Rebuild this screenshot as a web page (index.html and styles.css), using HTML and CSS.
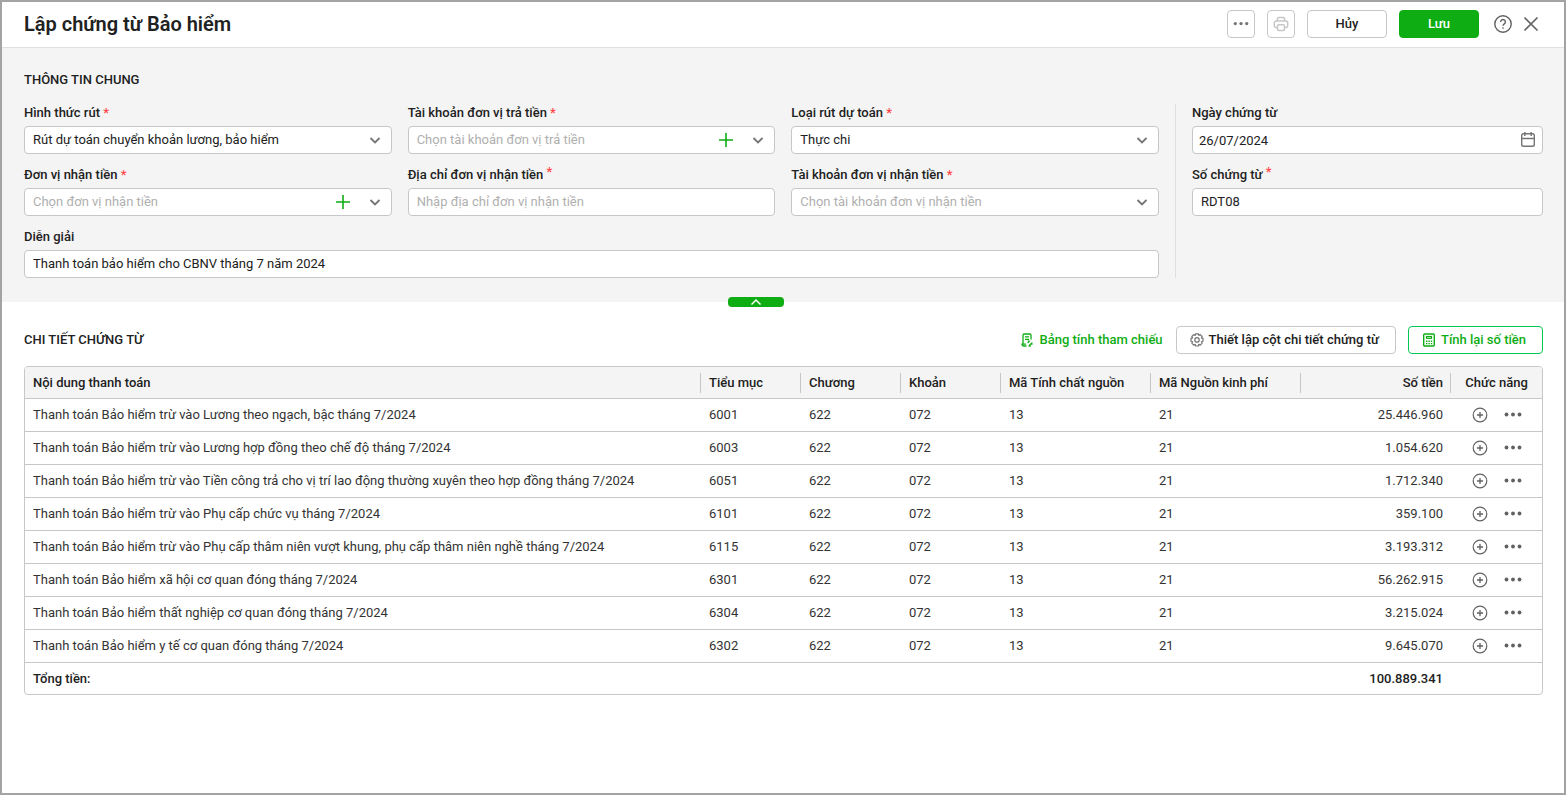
FILE: index.html
```
<!DOCTYPE html>
<html lang="vi">
<head>
    <meta charset="UTF-8">
    <meta name="viewport" content="width=device-width, initial-scale=1.0">
    <title>Lập chứng từ Bảo hiểm</title>
    <link rel="stylesheet" href="styles.css">
</head>
<body>
    <svg class="sprite" aria-hidden="true">
        <symbol id="i-chevron" viewBox="0 0 16 16"><path d="M3.5 6l4.5 4.5L12.5 6" fill="none" stroke="currentColor" stroke-width="1.8"/></symbol>
        <symbol id="i-plus" viewBox="0 0 16 16"><path d="M8 1v14M1 8h14" fill="none" stroke="currentColor" stroke-width="1.6"/></symbol>
        <symbol id="i-dots" viewBox="0 0 18 16"><circle cx="2.5" cy="7.5" r="1.9"/><circle cx="9" cy="7.5" r="1.9"/><circle cx="15.5" cy="7.5" r="1.9"/></symbol>
        <symbol id="i-add" viewBox="0 0 16 16"><circle cx="8" cy="8" r="6.8" fill="none" stroke="currentColor" stroke-width="1.2"/><path d="M8 5v6M5 8h6" fill="none" stroke="currentColor" stroke-width="1.3"/></symbol>
    </svg>

    <div class="popup">
        <header class="popup-header">
            <h1>Lập chứng từ Bảo hiểm</h1>
            <div class="header-actions">
                <button class="btn btn-icon" type="button" aria-label="Thêm"><svg class="dots-small"><use href="#i-dots"/></svg></button>
                <button class="btn btn-icon btn-print" type="button" aria-label="In">
                    <svg viewBox="0 0 16 16" fill="none" stroke="currentColor" stroke-width="1.5">
                        <path d="M4.5 5V2.6a1 1 0 0 1 1-1h5a1 1 0 0 1 1 1V5"/>
                        <path d="M4.5 11.5H3a1.7 1.7 0 0 1-1.7-1.7V7A1.9 1.9 0 0 1 3.2 5.1h9.6A1.9 1.9 0 0 1 14.7 7v2.8a1.7 1.7 0 0 1-1.7 1.7h-1.5"/>
                        <rect x="4.5" y="8.7" width="7" height="5.7" rx="1.2"/>
                    </svg>
                </button>
                <button class="btn btn-wide" type="button">Hủy</button>
                <button class="btn btn-wide btn-save" type="button">Lưu</button>
                <div class="window-actions">
                    <button class="plain" type="button" aria-label="Trợ giúp">
                        <svg class="icon-20" viewBox="0 0 20 20" fill="none" stroke="currentColor" stroke-width="1.4">
                            <circle cx="10" cy="10" r="8.2"/>
                            <path d="M7.6 7.9a2.4 2.4 0 1 1 3.7 2c-.9.6-1.3 1-1.3 1.9"/>
                            <circle cx="10" cy="14" r=".5" fill="currentColor" stroke-width=".6"/>
                        </svg>
                    </button>
                    <button class="plain" type="button" aria-label="Đóng">
                        <svg class="icon-20" viewBox="0 0 20 20" fill="none" stroke="currentColor" stroke-width="1.6"><path d="M3.5 3.5l13 13M16.5 3.5l-13 13"/></svg>
                    </button>
                </div>
            </div>
        </header>

        <section class="general">
            <h2>THÔNG TIN CHUNG</h2>
            <div class="general-body">
                <div class="fields">
                    <div class="field">
                        <label for="method">Hình thức rút <span class="required">*</span></label>
                        <div class="control">
                            <select id="method"><option>Rút dự toán chuyển khoản lương, bảo hiểm</option></select>
                            <svg class="icon"><use href="#i-chevron"/></svg>
                        </div>
                    </div>
                    <div class="field">
                        <label for="payer">Tài khoản đơn vị trả tiền <span class="required">*</span></label>
                        <div class="control">
                            <select id="payer" class="empty"><option>Chọn tài khoản đơn vị trả tiền</option></select>
                            <button class="plain add" type="button" aria-label="Thêm tài khoản"><svg class="icon"><use href="#i-plus"/></svg></button>
                            <svg class="icon"><use href="#i-chevron"/></svg>
                        </div>
                    </div>
                    <div class="field">
                        <label for="kind">Loại rút dự toán <span class="required">*</span></label>
                        <div class="control">
                            <select id="kind"><option>Thực chi</option></select>
                            <svg class="icon"><use href="#i-chevron"/></svg>
                        </div>
                    </div>
                    <div class="field">
                        <label for="receiver">Đơn vị nhận tiền <span class="required">*</span></label>
                        <div class="control">
                            <select id="receiver" class="empty"><option>Chọn đơn vị nhận tiền</option></select>
                            <button class="plain add" type="button" aria-label="Thêm đơn vị"><svg class="icon"><use href="#i-plus"/></svg></button>
                            <svg class="icon"><use href="#i-chevron"/></svg>
                        </div>
                    </div>
                    <div class="field">
                        <label for="address">Địa chỉ đơn vị nhận tiền <sup class="required">*</sup></label>
                        <div class="control"><input id="address" type="text" placeholder="Nhập địa chỉ đơn vị nhận tiền"></div>
                    </div>
                    <div class="field">
                        <label for="receiver-account">Tài khoản đơn vị nhận tiền <span class="required">*</span></label>
                        <div class="control">
                            <select id="receiver-account" class="empty"><option>Chọn tài khoản đơn vị nhận tiền</option></select>
                            <svg class="icon"><use href="#i-chevron"/></svg>
                        </div>
                    </div>
                    <div class="field field-full">
                        <label for="note">Diễn giải</label>
                        <div class="control"><input id="note" type="text" value="Thanh toán bảo hiểm cho CBNV tháng 7 năm 2024"></div>
                    </div>
                </div>
                <div class="voucher">
                    <div class="field">
                        <label for="date">Ngày chứng từ</label>
                        <div class="control control-date">
                            <input id="date" type="text" value="26/07/2024">
                            <svg class="icon" viewBox="0 0 16 16" fill="none" stroke="currentColor" stroke-width="1.4">
                                <rect x="1.7" y="1.7" width="12.6" height="12.6" rx="1.8"/>
                                <path d="M1.7 6.500h12.6M4.800 0v4M11.200 0v4"/>
                            </svg>
                        </div>
                    </div>
                    <div class="field">
                        <label for="number">Số chứng từ <sup class="required">*</sup></label>
                        <div class="control"><input id="number" type="text" value="RDT08"></div>
                    </div>
                </div>
            </div>
            <button class="collapse" type="button" aria-label="Thu gọn">
                <svg viewBox="0 0 12 8"><path d="M1.5 6.5L6 2l4.5 4.5" fill="none" stroke="currentColor" stroke-width="1.5"/></svg>
            </button>
        </section>

        <section class="detail">
            <div class="detail-header">
                <h2>CHI TIẾT CHỨNG TỪ</h2>
                <div class="detail-actions">
                    <a class="reference-link" href="#">
                        <svg class="icon-14" viewBox="0 0 14 14" fill="none" stroke="currentColor" stroke-width="1.3">
                            <path d="M6.5 13H3.800A1.800 1.800 0 0 1 2 11.200h4M3 11V2.200A1.200 1.200 0 0 1 4.200 1h5.600A1.200 1.200 0 0 1 11 2.200v4.300"/>
                            <path d="M5 3.800h4M5 6.300h4"/>
                            <path d="M7.600 10.200l2-2M9.800 8h-2.200M11.600 10.200l-2.800 2.800M11.900 9.500v2.200M8.600 13.200h2.200" stroke-width="1.200"/>
                        </svg>
                        Bảng tính tham chiếu
                    </a>
                    <button class="btn btn-tool btn-setup" type="button">
                        <svg class="icon-14" viewBox="0 0 14 14" fill="none" stroke="currentColor" stroke-width="1.2" stroke-linejoin="round">
                            <path d="M5.7.8h2.6l.5 1.600 1.500-.8 1.900 1.900-.8 1.400 1.600.5v2.800l-1.600.5.8 1.500-1.900 1.900-1.500-.8-.5 1.700H5.700l-.5-1.700-1.500.8-1.900-1.900.8-1.500L1 8.200V5.400l1.600-.5-.8-1.400 1.900-1.900 1.500.8z"/>
                            <circle cx="7" cy="6.900" r="2.200"/>
                        </svg>
                        Thiết lập cột chi tiết chứng từ
                    </button>
                    <button class="btn btn-tool btn-recalc" type="button">
                        <svg class="icon-14" viewBox="0 0 14 14" fill="none" stroke="currentColor" stroke-width="1.4">
                            <rect x="1.700" y="1" width="10.600" height="12" rx="1"/>
                            <rect x="4.500" y="3.500" width="5" height="1.800" stroke-width="1.200"/>
                            <path d="M4 8.300h6.200M4 10.600h6.200" stroke-dasharray="1.400 1"/>
                        </svg>
                        Tính lại số tiền
                    </button>
                </div>
            </div>

            <table class="voucher-table">
                <thead>
                    <tr>
                        <th>Nội dung thanh toán</th>
                        <th class="col-code">Tiểu mục</th>
                        <th class="col-code">Chương</th>
                        <th class="col-code">Khoản</th>
                        <th class="col-source">Mã Tính chất nguồn</th>
                        <th class="col-source">Mã Nguồn kinh phí</th>
                        <th class="col-source amount">Số tiền</th>
                        <th class="col-tools">Chức năng</th>
                    </tr>
                </thead>
                <tbody>
                    <tr>
                        <td>Thanh toán Bảo hiểm trừ vào Lương theo ngạch, bậc tháng 7/2024</td>
                        <td>6001</td><td>622</td><td>072</td><td>13</td><td>21</td>
                        <td class="amount">25.446.960</td>
                        <td><div class="tools"><button class="plain" type="button" aria-label="Thêm dòng"><svg class="icon"><use href="#i-add"/></svg></button><button class="plain" type="button" aria-label="Khác"><svg class="dots"><use href="#i-dots"/></svg></button></div></td>
                    </tr>
                    <tr>
                        <td>Thanh toán Bảo hiểm trừ vào Lương hợp đồng theo chế độ tháng 7/2024</td>
                        <td>6003</td><td>622</td><td>072</td><td>13</td><td>21</td>
                        <td class="amount">1.054.620</td>
                        <td><div class="tools"><button class="plain" type="button" aria-label="Thêm dòng"><svg class="icon"><use href="#i-add"/></svg></button><button class="plain" type="button" aria-label="Khác"><svg class="dots"><use href="#i-dots"/></svg></button></div></td>
                    </tr>
                    <tr>
                        <td>Thanh toán Bảo hiểm trừ vào Tiền công trả cho vị trí lao động thường xuyên theo hợp đồng tháng 7/2024</td>
                        <td>6051</td><td>622</td><td>072</td><td>13</td><td>21</td>
                        <td class="amount">1.712.340</td>
                        <td><div class="tools"><button class="plain" type="button" aria-label="Thêm dòng"><svg class="icon"><use href="#i-add"/></svg></button><button class="plain" type="button" aria-label="Khác"><svg class="dots"><use href="#i-dots"/></svg></button></div></td>
                    </tr>
                    <tr>
                        <td>Thanh toán Bảo hiểm trừ vào Phụ cấp chức vụ tháng 7/2024</td>
                        <td>6101</td><td>622</td><td>072</td><td>13</td><td>21</td>
                        <td class="amount">359.100</td>
                        <td><div class="tools"><button class="plain" type="button" aria-label="Thêm dòng"><svg class="icon"><use href="#i-add"/></svg></button><button class="plain" type="button" aria-label="Khác"><svg class="dots"><use href="#i-dots"/></svg></button></div></td>
                    </tr>
                    <tr>
                        <td>Thanh toán Bảo hiểm trừ vào Phụ cấp thâm niên vượt khung, phụ cấp thâm niên nghề tháng 7/2024</td>
                        <td>6115</td><td>622</td><td>072</td><td>13</td><td>21</td>
                        <td class="amount">3.193.312</td>
                        <td><div class="tools"><button class="plain" type="button" aria-label="Thêm dòng"><svg class="icon"><use href="#i-add"/></svg></button><button class="plain" type="button" aria-label="Khác"><svg class="dots"><use href="#i-dots"/></svg></button></div></td>
                    </tr>
                    <tr>
                        <td>Thanh toán Bảo hiểm xã hội cơ quan đóng tháng 7/2024</td>
                        <td>6301</td><td>622</td><td>072</td><td>13</td><td>21</td>
                        <td class="amount">56.262.915</td>
                        <td><div class="tools"><button class="plain" type="button" aria-label="Thêm dòng"><svg class="icon"><use href="#i-add"/></svg></button><button class="plain" type="button" aria-label="Khác"><svg class="dots"><use href="#i-dots"/></svg></button></div></td>
                    </tr>
                    <tr>
                        <td>Thanh toán Bảo hiểm thất nghiệp cơ quan đóng tháng 7/2024</td>
                        <td>6304</td><td>622</td><td>072</td><td>13</td><td>21</td>
                        <td class="amount">3.215.024</td>
                        <td><div class="tools"><button class="plain" type="button" aria-label="Thêm dòng"><svg class="icon"><use href="#i-add"/></svg></button><button class="plain" type="button" aria-label="Khác"><svg class="dots"><use href="#i-dots"/></svg></button></div></td>
                    </tr>
                    <tr>
                        <td>Thanh toán Bảo hiểm y tế cơ quan đóng tháng 7/2024</td>
                        <td>6302</td><td>622</td><td>072</td><td>13</td><td>21</td>
                        <td class="amount">9.645.070</td>
                        <td><div class="tools"><button class="plain" type="button" aria-label="Thêm dòng"><svg class="icon"><use href="#i-add"/></svg></button><button class="plain" type="button" aria-label="Khác"><svg class="dots"><use href="#i-dots"/></svg></button></div></td>
                    </tr>
                </tbody>
                <tfoot>
                    <tr>
                        <td colspan="6">Tổng tiền:</td>
                        <td class="amount">100.889.341</td>
                        <td></td>
                    </tr>
                </tfoot>
            </table>
        </section>
    </div>
</body>
</html>
```
FILE: styles.css
```
* {
    box-sizing: border-box;
}
body {
    margin: 0;
    font-family: Roboto, sans-serif;
    font-size: 13px;
    line-height: 18px;
    color: #212121;
    background-color: #fff;
}
button, input, select {
    font: inherit;
    color: inherit;
}
button {
    cursor: pointer;
}
svg {
    display: block;
    flex-shrink: 0;
}
h1, h2 {
    margin: 0;
}
h2 {
    font-size: 13px;
    font-weight: 500;
}
.sprite {
    display: none;
}
.popup {
    min-height: 100vh;
    border: 2px solid #a3a3a3;
}

/* Header */
.popup-header {
    display: flex;
    align-items: center;
    justify-content: space-between;
    padding: 8px 21px 9px 22px;
    border-bottom: 1px solid #e0e0e0;
}
.popup-header h1 {
    font-size: 20px;
    line-height: 28px;
    font-weight: 600;
}
.header-actions {
    display: flex;
    align-items: center;
    gap: 12px;
}
.window-actions {
    display: flex;
    gap: 8px;
    padding: 0 2px;
    color: #616161;
}
.btn {
    display: flex;
    align-items: center;
    justify-content: center;
    height: 28px;
    border: 1px solid #c7c7c7;
    border-radius: 4px;
    background-color: #fff;
    font-weight: 500;
}
.btn-icon {
    width: 28px;
    padding: 0;
    color: #757575;
}
.btn-print {
    color: #c7c7c7;
}
.btn-print svg {
    width: 16px;
    height: 16px;
}
.btn-wide {
    width: 80px;
}
.btn-save {
    border-color: #0fad14;
    background-color: #0fad14;
    color: #fff;
}
.plain {
    padding: 0;
    border: 0;
    background: none;
}
.icon {
    width: 16px;
    height: 16px;
}
.icon-14 {
    width: 14px;
    height: 14px;
}
.icon-20 {
    width: 20px;
    height: 20px;
}
.dots {
    width: 18px;
    height: 16px;
    fill: currentColor;
}
.dots-small {
    width: 16px;
    height: 14px;
    fill: currentColor;
}

/* General information */
.general {
    position: relative;
    padding: 23px 21px 24px 22px;
    background-color: #f4f4f4;
}
.general-body {
    display: flex;
    gap: 16px;
    margin-top: 15px;
}
.fields {
    flex: 1;
    display: grid;
    grid-template-columns: repeat(3, minmax(0, 1fr));
    gap: 12px 16px;
}
.field-full {
    grid-column: 1 / -1;
}
.voucher {
    display: flex;
    flex-direction: column;
    gap: 12px;
    width: 368px;
    padding-left: 16px;
    border-left: 1px solid #e0e0e0;
}
.field label {
    display: block;
    margin-bottom: 4px;
    font-weight: 500;
}
.required {
    color: #ff4747;
}
sup.required {
    font-size: 13px;
    line-height: 0;
    vertical-align: 3px;
}
.control {
    display: flex;
    align-items: center;
    gap: 16px;
    height: 28px;
    padding: 0 8px;
    border: 1px solid #c7c7c7;
    border-radius: 4px;
    background-color: #fff;
    color: #757575;
}
.control input, .control select {
    flex: 1;
    min-width: 0;
    height: 26px;
    padding: 0;
    border: 0;
    outline: 0;
    background: none;
    appearance: none;
    color: #212121;
}
.control input {
    padding-bottom: 2px;
}
.control-date {
    padding: 0 6px;
}
.control-date input {
    padding-bottom: 0;
}
.control select.empty, .control input::placeholder {
    color: #b0b0b0;
}
.control .add {
    color: #0fad14;
}
.collapse {
    position: absolute;
    bottom: -5px;
    left: calc(50% - 55px);
    display: flex;
    align-items: center;
    justify-content: center;
    width: 56px;
    height: 10px;
    padding: 0;
    border: 0;
    border-radius: 4px;
    background-color: #0fad14;
    color: #fff;
}
.collapse svg {
    width: 12px;
    height: 8px;
}

/* Detail table */
.detail {
    padding: 24px 21px 24px 22px;
}
.detail-header {
    display: flex;
    align-items: center;
    justify-content: space-between;
    margin-bottom: 12px;
}
.detail-actions {
    display: flex;
    align-items: center;
    gap: 12px;
}
.reference-link {
    display: flex;
    align-items: center;
    gap: 5px;
    padding-right: 1px;
    color: #0fad14;
    font-weight: 500;
    text-decoration: none;
}
.btn-tool {
    gap: 5px;
    padding: 0 16px 0 13px;
}
.btn-setup svg {
    color: #757575;
}
.btn-recalc {
    border-color: #00c853;
    color: #0fad14;
}
.voucher-table {
    width: 100%;
    table-layout: fixed;
    border: 1px solid #c7c7c7;
    border-radius: 4px;
    border-collapse: separate;
    border-spacing: 0;
    overflow: hidden;
}
.voucher-table th, .voucher-table td {
    height: 33px;
    padding: 0 8px;
    border-bottom: 1px solid #c7c7c7;
    text-align: left;
}
.voucher-table th {
    height: 32px;
    background: linear-gradient(#c7c7c7, #c7c7c7) right center / 1px 20px no-repeat #f4f4f4;
    font-weight: 500;
}
.voucher-table tbody td {
    color: #333;
}
.voucher-table tfoot td {
    height: 31px;
    border-bottom: 0;
    font-weight: 500;
}
.voucher-table .amount {
    text-align: right;
}
.col-code {
    width: 100px;
}
.col-source {
    width: 150px;
}
.voucher-table .col-tools {
    width: 91px;
    background-image: none;
    text-align: center;
}
.tools {
    display: flex;
    justify-content: center;
    gap: 16px;
    color: #616161;
}
```
